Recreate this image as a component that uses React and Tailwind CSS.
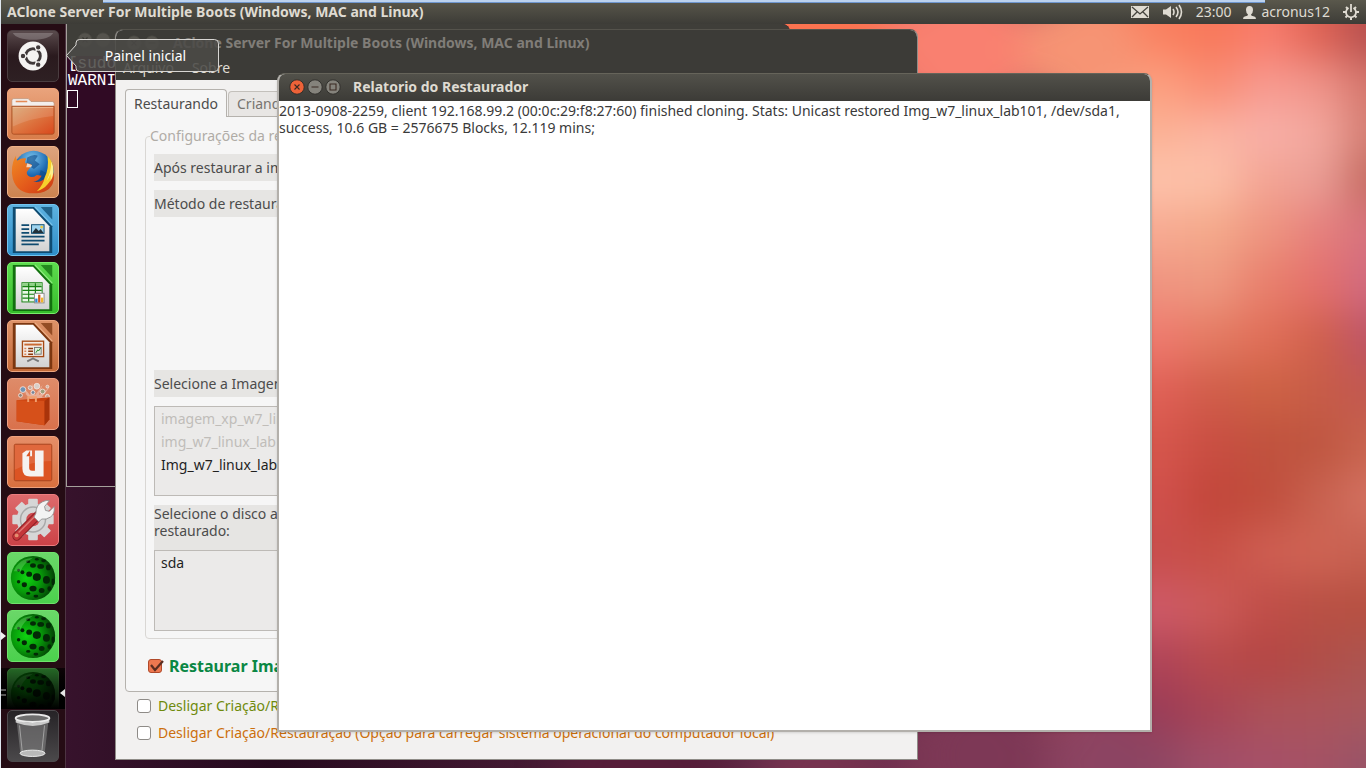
import React, { useState } from 'react';

// Colour mesh on the right side of the wallpaper, one row per height, left to right
const MESH_X = [1060, 1185, 1240, 1295, 1345, 1440];
const MESH = [
  { y: -20, h: 80, colors: ['#fa8060', '#f8785a', '#f87c6c', '#de6254', '#b54f4e'] },
  { y: 60, h: 50, colors: ['#fca080', '#f98d74', '#f79a90', '#f0948a', '#d4766c'] },
  { y: 110, h: 45, colors: ['#fbb295', '#fbb4a2', '#f8b0a8', '#f3a89e', '#d47e74'] },
  { y: 155, h: 50, colors: ['#fdc2aa', '#fcc0a8', '#f3a494', '#ea9e96', '#c46a60'] },
  { y: 205, h: 52, colors: ['#f7aa92', '#f4a98a', '#ee9480', '#e6807c', '#d6727e'] },
  { y: 257, h: 55, colors: ['#ef9480', '#ee9880', '#e87f6c', '#e4706c', '#d06a80'] },
  { y: 312, h: 53, colors: ['#ee7a6e', '#e47a62', '#df6e58', '#d0604c', '#bd5468'] },
  { y: 365, h: 53, colors: ['#e06056', '#d05d4a', '#cd6244', '#c75c48', '#c25850'] },
  { y: 418, h: 54, colors: ['#d6564c', '#c94e42', '#c0523e', '#bf5640', '#c8644f'] },
  { y: 472, h: 53, colors: ['#d0504c', '#c2463a', '#c04e3d', '#c86250', '#d47262'] },
  { y: 525, h: 55, colors: ['#c84e4c', '#c85046', '#ce5e52', '#cf6454', '#c46050'] },
  { y: 580, h: 55, colors: ['#ce5a68', '#cc5a58', '#c04e48', '#b85044', '#b75041'] },
  { y: 635, h: 50, colors: ['#b04458', '#b84a4c', '#b44644', '#b04e48', '#ac5550'] },
  { y: 685, h: 50, colors: ['#9c3c56', '#a84454', '#ac5258', '#ac545a', '#a8585c'] },
  { y: 735, h: 80, colors: ['#904864', '#a04e68', '#a65068', '#a45264', '#985468'] },
];

// Softer spots left of the mesh: x, y, radius, colour
const SPOTS = [
  [820, 30, 80, '#fb7350'],
  [960, 50, 80, '#f98070'],
  [1080, 50, 60, '#f69474'],
  [1100, 765, 60, '#8c4462'],
  [980, 755, 70, '#7d3856'],
  [820, 775, 60, '#76334f'],
  [640, 780, 80, '#561d39'],
];

const Wallpaper = () => (
  <svg
    className="absolute inset-0 h-full w-full"
    viewBox="0 0 1366 768"
    preserveAspectRatio="none"
    aria-hidden="true"
  >
    <defs>
      <linearGradient id="wall" x1="0" x2="1" y1="0" y2="0">
        <stop offset="0" stopColor="#3c1530" />
        <stop offset="0.2" stopColor="#260a1e" />
        <stop offset="0.65" stopColor="#6f3050" />
        <stop offset="1" stopColor="#cf6252" />
      </linearGradient>
      <filter id="soft" x="-20%" y="-20%" width="140%" height="140%" colorInterpolationFilters="sRGB">
        <feGaussianBlur stdDeviation="20" />
      </filter>
    </defs>
    <rect width="1366" height="768" fill="url(#wall)" />
    <g filter="url(#soft)">
      {MESH.map(({ y, h, colors }) =>
        colors.map((color, i) => (
          <rect key={`${y}-${color}`} x={MESH_X[i]} y={y} width={MESH_X[i + 1] - MESH_X[i] + 1} height={h + 1} fill={color} />
        )),
      )}
      {SPOTS.map(([x, y, r, color]) => (
        <circle key={`${x}-${y}`} cx={x} cy={y} r={r} fill={color} />
      ))}
    </g>
  </svg>
);

const DashIcon = () => (
  <svg viewBox="0 0 52 52" className="h-full w-full">
    <path d="M5 2h42q-4 7-21 7T5 2z" fill="#fff" opacity="0.22" />
    <circle cx="26" cy="26" r="15" fill="#f5f3f2" />
    <circle cx="26" cy="26" r="7.6" fill="none" stroke="#40393a" strokeWidth="3" />
    <path d="M26 26l-13 0M26 26l6.5-11.3M26 26l6.5 11.3" stroke="#f5f3f2" strokeWidth="1.4" />
    <g fill="#40393a" stroke="#f5f3f2" strokeWidth="1.2">
      <circle cx="15.6" cy="26" r="2.9" />
      <circle cx="31.4" cy="17" r="2.9" />
      <circle cx="31.4" cy="35" r="2.9" />
    </g>
    <circle cx="26" cy="26" r="5.6" fill="#f5f3f2" />
  </svg>
);

const FolderIcon = () => (
  <svg viewBox="0 0 52 52" className="h-full w-full">
    <defs>
      <linearGradient id="folder" x1="0" y1="0" x2="1" y2="1">
        <stop offset="0" stopColor="#d8a470" />
        <stop offset="0.5" stopColor="#dd7540" />
        <stop offset="1" stopColor="#d9481c" />
      </linearGradient>
    </defs>
    <path d="M4 18V12q0-2 2-2h15l3 3h22q2 0 2 2v3z" fill="#f3efec" stroke="#b98a6e" strokeWidth="0.7" />
    <path d="M8 13h12" stroke="#e38a55" strokeWidth="1.6" />
    <path d="M4 18h44v27q0 2-2 2H6q-2 0-2-2z" fill="url(#folder)" stroke="#a84d20" strokeWidth="0.9" />
    <path d="M5 19h42v9Q24 30 5 39z" fill="#fff" opacity="0.13" />
    <path d="M5 19.2h42" stroke="#f6c39c" strokeWidth="0.8" />
  </svg>
);

const FirefoxIcon = () => (
  <svg viewBox="0 0 52 52" className="h-full w-full">
    <defs>
      <radialGradient id="globe" cx="0.45" cy="0.2" r="0.8">
        <stop offset="0" stopColor="#7cc6ee" />
        <stop offset="0.5" stopColor="#1d69b2" />
        <stop offset="1" stopColor="#0c2c66" />
      </radialGradient>
      <linearGradient id="fox" x1="0" y1="0" x2="1" y2="1">
        <stop offset="0" stopColor="#f08a24" />
        <stop offset="0.6" stopColor="#e2561a" />
        <stop offset="1" stopColor="#c93a14" />
      </linearGradient>
    </defs>
    <circle cx="26.5" cy="25" r="21" fill="url(#globe)" />
    <path d="M20 11q6-4 11-2l-3 5 5 4-6 5-8-5zM34 24l6 3-2 8-6-3z" fill="#0d4787" opacity="0.6" />
    <path
      d="M8 9q0 4 2 5 4-3 9-2-2 3-1 5 5 0 7 2l-4 5q-3 3 0 6 4 3 9-1l5 1q-3 6-9 6 7 2 13-4 5-5 5-13 3 6 4 12-1 16-18 17-20 2-25-15-3-12 3-24z"
      fill="url(#fox)"
    />
    <path d="M41 9q7 7 6 16-1 9-6 14-4 5-11 7 7-7 8-14 5-10 3-23z" fill="#f7cf2c" />
    <path d="M45 15q5 11-1 21 1-6 0-8-1 4-4 7 5-9 5-20z" fill="#fdf08a" />
    <path d="M20 17l5 2-1 2-5 0z" fill="#f3d7c1" />
  </svg>
);

// Sheet shared by the three LibreOffice launchers
const Sheet = ({ dark, light, children }) => (
  <svg viewBox="0 0 52 52" className="h-full w-full">
    <defs>
      <linearGradient id={`page${dark.slice(1)}`} x1="0" y1="0" x2="0" y2="1">
        <stop offset="0" stopColor="#ffffff" />
        <stop offset="1" stopColor="#d2d2d2" />
      </linearGradient>
    </defs>
    <path d="M5 2h22l19 20v28H5z" fill={dark} />
    <path d="M34 2h12v13z" fill={dark} opacity="0.75" />
    <path d="M28 2l18 19" stroke={light} strokeWidth="1.2" opacity="0.7" />
    <path d="M8 4h18l17 18v26H8z" fill={`url(#page${dark.slice(1)})`} />
    {children}
  </svg>
);

const WriterIcon = () => (
  <Sheet dark="#0f4b70" light="#8fd0f2">
    <path d="M14 21h8M14 25h8M14 29h8M14 33h24M14 37h24M14 41h18" stroke="#0f4b70" strokeWidth="1.8" />
    <rect x="24.5" y="20.5" width="13" height="9" fill="#9ed4ef" stroke="#0f4b70" />
    <path d="M25 29l4-5 3 3 2-2 3 4z" fill="#22313a" />
    <circle cx="35" cy="23" r="1.4" fill="#f1c93a" />
  </Sheet>
);

const CalcIcon = () => (
  <Sheet dark="#12700f" light="#a9f59a">
    <rect x="14.5" y="20.5" width="21" height="20" fill="#e9f7e6" stroke="#178012" />
    <rect x="15" y="21" width="20" height="3" fill="#8fd187" />
    <path d="M15 24.5h20M15 28.5h20M15 32.5h20M15 36.5h20M21.5 21v19M28.5 21v19" stroke="#178012" strokeWidth="1.2" />
    <rect x="27.5" y="31.5" width="10" height="10" fill="#fff" stroke="#8b8b8b" />
    <path d="M29.5 41v-4" stroke="#2b86d1" strokeWidth="2.4" />
    <path d="M32.5 41v-8" stroke="#d1591c" strokeWidth="2.4" />
    <path d="M35.5 41v-5" stroke="#f0b52c" strokeWidth="2.4" />
  </Sheet>
);

const ImpressIcon = () => (
  <Sheet dark="#7c3710" light="#f4bd95">
    <rect x="15" y="21" width="22" height="16" fill="#f4ebe4" stroke="#a54a16" strokeWidth="1.4" />
    <path d="M17 24.5h18" stroke="#c96a34" strokeWidth="2" />
    <path d="M17 28.5h2M17 31.5h2M17 34.5h2" stroke="#d9855a" strokeWidth="1.6" />
    <path d="M21 28.5h5M21 31.5h5M21 34.5h5" stroke="#8a3a0e" strokeWidth="1.6" />
    <rect x="27.5" y="27.5" width="7" height="7" fill="#dff0dd" stroke="#777" />
    <path d="M29 33l2-3 1 1 2-3" fill="none" stroke="#208020" />
    <path d="M26 38v2M20 42l6-3 6 3" fill="none" stroke="#777" strokeWidth="2" />
  </Sheet>
);

const SoftwareIcon = () => (
  <svg viewBox="0 0 52 52" className="h-full w-full">
    <path d="M25 22L9 7l10 9-4-9 8 10 2-13 3 13 8-11-4 11 11-8-8 10 9-1-13 6z" fill="#fff" opacity="0.35" />
    <g stroke="#f6e2da" strokeWidth="0.9">
      <circle cx="15.5" cy="11" r="3" fill="#6f95b5" />
      <circle cx="23" cy="9" r="2" fill="#bda99c" />
      <circle cx="30" cy="7.5" r="3" fill="#d8cfc8" />
      <circle cx="36" cy="13" r="2.5" fill="#9c9f7c" />
      <circle cx="41" cy="8" r="1.5" fill="#c9b6a6" />
      <circle cx="13" cy="17" r="2" fill="#8d8379" />
      <circle cx="26" cy="14" r="2" fill="#74869c" />
      <circle cx="41" cy="18" r="2" fill="#c6a693" />
    </g>
    <path d="M9 22l34-3v23l-5 6-29-4z" fill="#c8410f" />
    <path d="M9 22l29 1v25l-29-4z" fill="#d6501a" />
    <path d="M38 23l5-4v23l-5 6z" fill="#a9340b" />
    <path d="M21 24v-5h8v5" fill="none" stroke="#f0a070" strokeWidth="2" />
  </svg>
);

const UbuntuOneIcon = () => (
  <svg viewBox="0 0 52 52" className="h-full w-full">
    <rect x="6.5" y="7.5" width="39" height="38" rx="1.5" fill="#dc5423" stroke="#a8441d" />
    <path d="M7 8h38v17q-20 0-38 9z" fill="#fff" opacity="0.12" />
    <path d="M15 17l4-3h6v6h-3v12q0 3 3 3h3V14h9v27H23q-8 0-8-8z" fill="#f5f2f0" />
    <path d="M19 20l4-6v6z" fill="#dc5423" />
  </svg>
);

const SettingsIcon = () => (
  <svg viewBox="0 0 52 52" className="h-full w-full">
    <g fill="#d6d6d6">
      {[0, 45, 90, 135].map((deg) => (
        <rect key={deg} x="21" y="4" width="10" height="43" rx="1" transform={`rotate(${deg} 26 25.5)`} />
      ))}
      <circle cx="26" cy="25.5" r="17" />
    </g>
    <circle cx="26" cy="25.5" r="13" fill="none" stroke="#a9a9a9" strokeWidth="1.5" />
    <circle cx="26" cy="25.5" r="7" fill="#cf4b50" />
    <path d="M9 43l22-22" stroke="#8c1f24" strokeWidth="9" strokeLinecap="round" />
    <path d="M9 43l22-22" stroke="#c3363a" strokeWidth="7" strokeLinecap="round" />
    <path d="M11 39l18-18" stroke="#e07a76" strokeWidth="1.5" />
    <path
      d="M29 19q0-9 7-12 4-2 7-1l-5 6 1 4 4 1 5-5q1 8-4 11-4 3-9 2l-3 3-5-5z"
      fill="#f3f3f3"
      stroke="#8f8f8f"
      strokeWidth="0.9"
    />
    <circle cx="9" cy="42" r="2" fill="#e38d6f" />
  </svg>
);

const SphereIcon = () => (
  <svg viewBox="0 0 52 52" className="h-full w-full">
    <defs>
      <radialGradient id="sphere" cx="0.35" cy="0.5" r="0.65">
        <stop offset="0" stopColor="#0fd411" />
        <stop offset="0.5" stopColor="#079a0a" />
        <stop offset="1" stopColor="#033f05" />
      </radialGradient>
    </defs>
    <circle cx="26" cy="26" r="23" fill="url(#sphere)" />
    <g fill="#032806">
      <ellipse cx="30" cy="6.5" rx="2" ry="1.3" />
      <ellipse cx="37" cy="8" rx="2.5" ry="1.5" />
      <ellipse cx="21" cy="9" rx="2.2" ry="1.5" />
      <ellipse cx="26" cy="13" rx="3" ry="2.3" />
      <ellipse cx="34" cy="14" rx="3.5" ry="2.5" />
      <ellipse cx="42" cy="15" rx="2.5" ry="3" />
      <ellipse cx="11" cy="18" rx="1.5" ry="1.5" />
      <ellipse cx="15" cy="20" rx="2" ry="2" />
      <ellipse cx="22" cy="22" rx="3" ry="2.8" />
      <ellipse cx="30" cy="25" rx="4.2" ry="4" />
      <ellipse cx="40" cy="28" rx="3.6" ry="4" />
      <ellipse cx="47" cy="30" rx="1.7" ry="3.5" />
      <ellipse cx="11" cy="30" rx="1.8" ry="1.8" />
      <ellipse cx="17" cy="33" rx="2.7" ry="2.5" />
      <ellipse cx="26" cy="37" rx="3.7" ry="3" />
      <ellipse cx="35" cy="39" rx="3" ry="2.6" />
      <ellipse cx="43" cy="37" rx="2" ry="2.5" />
      <ellipse cx="21" cy="42" rx="2.2" ry="1.5" />
      <ellipse cx="29" cy="45" rx="2.5" ry="1.5" />
    </g>
    <path d="M6 19q5-13 20-14-10 6-13 14z" fill="#b4ffb0" opacity="0.25" />
  </svg>
);

const TrashIcon = () => (
  <svg viewBox="0 0 52 52" className="h-full w-full">
    <path d="M9 11l4 34q12 5 25 0l4-34z" fill="#8a8a8a" opacity="0.55" />
    <path d="M12 15l3 29M38 15l-3 29" stroke="#bdbdbd" opacity="0.7" />
    <ellipse cx="25.5" cy="44" rx="13" ry="3.3" fill="#b9b9b9" stroke="#ececec" />
    <path d="M8 8q17 9 35 0v4q-17 7-35 0z" fill="#c9c9c9" />
    <ellipse cx="25.5" cy="7.5" rx="17.5" ry="4" fill="#6d6d6d" stroke="#e9e9e9" strokeWidth="2" />
  </svg>
);

const LAUNCHERS = [
  { name: 'Painel inicial', icon: DashIcon, tile: 'bg-linear-to-b from-[#5a4b4d] via-[#2a1a1e] to-[#2e2023] border-[#4a3d40]' },
  { name: 'Pasta pessoal', icon: FolderIcon, tile: 'bg-linear-to-b from-[#e9a37c] to-[#d87d4a] border-[#f0a37a]' },
  { name: 'Firefox', icon: FirefoxIcon, tile: 'bg-linear-to-b from-[#dda37e] to-[#cc8350] border-[#eeb188]' },
  { name: 'LibreOffice Writer', icon: WriterIcon, tile: 'bg-linear-to-b from-[#5db2e0] to-[#2f8fc9] border-[#72c4ef]' },
  { name: 'LibreOffice Calc', icon: CalcIcon, tile: 'bg-linear-to-b from-[#5ddb4e] to-[#35bd2b] border-[#79ee6b]' },
  { name: 'LibreOffice Impress', icon: ImpressIcon, tile: 'bg-linear-to-b from-[#dd9268] to-[#c46a38] border-[#eda67f]' },
  { name: 'Central de programas', icon: SoftwareIcon, tile: 'bg-linear-to-b from-[#de8b69] to-[#d9714c] border-[#eda083]' },
  { name: 'Ubuntu One', icon: UbuntuOneIcon, tile: 'bg-linear-to-b from-[#e58e68] to-[#d9703f] border-[#eea17e]' },
  { name: 'Configurações', icon: SettingsIcon, tile: 'bg-linear-to-b from-[#dd6a6c] to-[#cc4247] border-[#ec7d7f]' },
  { name: 'AClone', icon: SphereIcon, tile: 'bg-linear-to-b from-[#6ad768] to-[#4bd14d] border-[#6fe26c]' },
  { name: 'AClone Server', icon: SphereIcon, tile: 'bg-linear-to-b from-[#6ad768] to-[#4bd14d] border-[#6fe26c]', running: true },
];

const Tile = ({ name, tile, children }) => (
  <button type="button" aria-label={name} className={`h-[52px] w-[52px] shrink-0 rounded-[5px] border ${tile}`}>
    {children}
  </button>
);

const Launcher = () => (
  <nav className="relative z-10 ml-px flex w-[65px] shrink-0 flex-col items-start gap-[6px] border-r border-[#4d3442] bg-[#250c14] pl-[6px] pt-[6px]">
    {LAUNCHERS.map(({ name, icon: Icon, tile, running }) => (
      <div key={name} className="relative flex">
        <Tile name={name} tile={tile}>
          <Icon />
        </Tile>
        {running && (
          <svg viewBox="0 0 5 8" className="absolute top-[22px] -left-[6px] h-2 w-[5px]">
            <path d="M0 0l5 4-5 4z" fill="#f2f2f2" />
          </svg>
        )}
      </div>
    ))}
    {/* folded entry above the trash */}
    <div className="relative -ml-[6px] h-[41px] w-16 overflow-hidden bg-linear-to-b from-[#1a070d] to-black pl-[6px]">
      <Tile name="AClone Client" tile="bg-[#4bd14d] border-[#6fe26c]">
        <SphereIcon />
      </Tile>
      <div className="absolute inset-0 bg-linear-to-b from-black/50 to-black" />
      <svg viewBox="0 0 64 12" className="absolute top-[19px] left-0 h-3 w-16">
        <path d="M0 3h5M0 8h5" stroke="#555" strokeWidth="2" />
        <path d="M64 2l-5 4 5 4z" fill="#e5e5e5" />
      </svg>
    </div>
    <div className="-mt-[5px] flex">
      <Tile name="Lixeira" tile="bg-linear-to-b from-[#262326] to-[#4b494b] border-[#4d4a4d]">
        <TrashIcon />
      </Tile>
    </div>
  </nav>
);

const TopBar = () => (
  <header className="relative z-20 ml-px flex h-6 shrink-0 items-center bg-linear-to-b from-[#5a584c] to-[#3d3c37] px-[6px] text-[#dfdbd2]">
    <div className="absolute top-0 right-[101px] left-[102px] h-[3px] border-b border-[#6f97cf] bg-[#bcd2ee]" />
    <h1 className="font-bold">AClone Server For Multiple Boots (Windows, MAC and Linux)</h1>
    <div className="ml-auto flex items-center pr-px">
      <button type="button" aria-label="Mensagens" className="mr-[14px]">
        <svg viewBox="0 0 18 12" className="h-3 w-[18px]">
          <rect width="18" height="12" fill="#dfdbd2" />
          <path d="M1 1l8 7 8-7M1 11l5-5M17 11l-5-5" fill="none" stroke="#45443e" strokeWidth="1.3" />
        </svg>
      </button>
      <button type="button" aria-label="Som" className="mr-[13px]">
        <svg viewBox="0 0 20 16" className="h-4 w-5">
          <path d="M0 5.5h3L8 2v12l-5-3.500H0z" fill="#dfdbd2" />
          <path d="M10 5q2 3 0 6M13 3q4 5 0 10M16 1q5 7 0 14" fill="none" stroke="#dfdbd2" strokeWidth="1.6" />
        </svg>
      </button>
      <span className="mr-3">23:00</span>
      <svg viewBox="0 0 13 13" className="mr-[5px] h-[13px] w-[13px]">
        <path d="M6.5 0q3.500 0 3.500 4 0 3-2 4.500 0 1.500 2.500 1.700 2.500.3 2.500 2.800H0q0-2.500 2.500-2.800Q5 10 5 8.500 3 7 3 4q0-4 3.500-4z" fill="#dfdbd2" />
      </svg>
      <span className="mr-[13px]">acronus12</span>
      <button type="button" aria-label="Sistema">
        <svg viewBox="0 0 16 16" className="h-4 w-4">
          <path
            d="M3 3l2 2M13 3l-2 2M0 8h3M16 8h-3M2.500 13.500l2-2M13.500 13.500l-2-2M8 16v-3"
            stroke="#dfdbd2"
            strokeWidth="2"
          />
          <path d="M5.500 4a5 5 0 1 0 5 0" fill="none" stroke="#dfdbd2" strokeWidth="1.8" />
          <path d="M8 0v8" stroke="#dfdbd2" strokeWidth="1.8" />
        </svg>
      </button>
    </div>
  </header>
);

const BUTTONS = [
  { name: 'Fechar', d: 'M5.500 5.500l5 5M10.500 5.500l-5 5' },
  { name: 'Minimizar', d: 'M4.500 8h7' },
  { name: 'Maximizar', d: 'M5 5h6v6H5z' },
];

const WindowButtons = ({ active, count = 3 }) => (
  <div className="flex gap-[2px]">
    {BUTTONS.slice(0, count).map(({ name, d }, i) => (
      <button key={name} type="button" aria-label={name}>
        <svg viewBox="0 0 16 16" className="h-4 w-4">
          <circle
            cx="8"
            cy="8"
            r="7.2"
            fill={active ? (i === 0 ? '#ee6238' : '#85837c') : '#55534d'}
            stroke={active ? '#2f2e2a' : '#46453f'}
            strokeWidth="0.9"
          />
          <path d={d} fill="none" stroke={active ? '#3b2a22' : '#35342f'} strokeWidth="1.1" />
        </svg>
      </button>
    ))}
  </div>
);

const Terminal = () => (
  <section className="absolute top-0 left-0 h-[463px] w-[724px] overflow-hidden rounded-tr-lg border-b border-l border-[#a5a09b] bg-[#300a24]">
    <div className="flex h-8 items-center bg-[#3f3e39] pl-[10px]">
      <WindowButtons />
    </div>
    <pre className="pl-px font-['Liberation_Mono',monospace] text-[16px] leading-[17px] text-white">
      {'[sudo\nWARNIN'}
    </pre>
    <div className="h-[18px] w-[11px] border border-white" />
  </section>
);

const Check = ({ label, bold, color, defaultChecked = false }) => {
  const [checked, setChecked] = useState(defaultChecked);

  return (
    <label className={`flex items-center gap-[7px] whitespace-nowrap ${color} ${bold ? 'text-[16px] font-bold' : ''}`}>
      <span className="relative flex">
        <input
          type="checkbox"
          checked={checked}
          onChange={() => setChecked(!checked)}
          className="h-[14px] w-[14px] appearance-none rounded-[3px] border border-[#8e8b87] bg-white checked:border-[#b0492a] checked:bg-[#ee7850]"
        />
        {checked && (
          <svg viewBox="0 0 16 14" className="pointer-events-none absolute top-0 left-0 h-[14px] w-4">
            <path d="M3 6l4 5 8-9" fill="none" stroke="#5b2d20" strokeWidth="2.2" />
          </svg>
        )}
      </span>
      {label}
    </label>
  );
};

const FieldLabel = ({ children }) => (
  <p className="h-[27px] bg-[#e6e5e3] leading-[27px] whitespace-nowrap">{children}</p>
);

const MainWindow = () => (
  <section className="absolute top-[5px] left-[49px] flex h-[731px] w-[803px] flex-col overflow-hidden rounded-t-lg border border-[#8f8c87] border-t-[#55534c] bg-[#f2f1f0] text-[#4c4c4c]">
    <div className="h-[50px] shrink-0 bg-[#3c3b37]">
      <div className="flex h-[26px] items-center gap-[13px] pl-[10px]">
        <WindowButtons count={2} />
        <h2 className="font-bold whitespace-nowrap text-[#807d78]">
          AClone Server For Multiple Boots (Windows, MAC and Linux)
        </h2>
      </div>
      <div className="flex h-6 items-center gap-[18px] pl-[7px] text-[#dfdbd2]">
        <button type="button">Arquivo</button>
        <button type="button">Sobre</button>
      </div>
    </div>

    <div className="px-[9px] pt-[9px]">
      <div role="tablist" className="flex items-end">
        <button
          type="button"
          role="tab"
          aria-selected="true"
          className="relative -mb-px h-[28px] w-[102px] rounded-t-[4px] border border-b-0 border-[#b5b2ad] bg-[#f6f6f6]"
        >
          Restaurando
        </button>
        <button
          type="button"
          role="tab"
          aria-selected="false"
          className="ml-px h-[25px] rounded-t-[4px] border border-b-0 border-[#c3c0bb] bg-[#e8e6e4] px-2 text-[#77746f]"
        >
          Criando
        </button>
      </div>

      <div className="rounded-b-[4px] border border-[#b5b2ad] bg-[#f6f6f6] px-[19px] pt-[9px] pb-[15px]">
        <fieldset className="rounded-[4px] border border-[#d9d7d4] px-2 pb-[7px]">
          <legend className="-ml-1 h-5 leading-5 text-[#b0aca6]">Configurações da restauração</legend>
          <div className="mt-2 flex flex-col gap-[9px]">
            <FieldLabel>Após restaurar a imagem:</FieldLabel>
            <FieldLabel>Método de restauração:</FieldLabel>
          </div>
          <div className="mt-[153px]">
            <FieldLabel>Selecione a Imagem:</FieldLabel>
          </div>
          <ul className="mt-[9px] h-[90px] border border-[#bdbab6] bg-[#ebeae9] pl-[6px] leading-[23px]">
            <li className="text-[#c0bdb9]">imagem_xp_w7_linux</li>
            <li className="text-[#c0bdb9]">img_w7_linux_lab</li>
            <li className="text-[#1f1f1f]">Img_w7_linux_lab101</li>
          </ul>
          <p className="mt-[9px] h-[45px] bg-[#e6e5e3] leading-[17px]">
            Selecione o disco a ser
            <br />
            restaurado:
          </p>
          <ul className="h-[81px] border border-[#bdbab6] bg-[#ebeae9] pl-[6px] leading-[23px]">
            <li className="text-[#1f1f1f]">sda</li>
          </ul>
        </fieldset>
        <div className="mt-[17px] pl-[3px]">
          <Check label="Restaurar Imagem" color="text-[#0a8744]" bold defaultChecked />
        </div>
      </div>

      <div className="mt-1 flex flex-col gap-[7px] pl-3">
        <Check label="Desligar Criação/Restauração" color="text-[#6f8a0c]" />
        <Check
          label="Desligar Criação/Restauração (Opção para carregar sistema operacional do computador local)"
          color="text-[#cc6f0c]"
        />
      </div>
    </div>
  </section>
);

const ReportWindow = () => (
  <section className="absolute top-[49px] left-[211px] flex h-[659px] w-[875px] flex-col overflow-hidden rounded-t-lg border-2 border-t border-[#b3b0ab] border-t-[#66645a] bg-white shadow-sm">
    <div className="flex h-[27px] shrink-0 items-center gap-3 bg-linear-to-b from-[#52514a] to-[#3c3b37] pb-px pl-[10px]">
      <WindowButtons active />
      <h2 className="font-bold text-[#dfdbd2]">Relatorio do Restaurador</h2>
    </div>
    <p className="pt-px leading-[17px] text-[#3a3a3a]">
      2013-0908-2259, client 192.168.99.2 (00:0c:29:f8:27:60) finished cloning. Stats: Unicast restored
      Img_w7_linux_lab101, /dev/sda1, success, 10.6 GB = 2576675 Blocks, 12.119 mins;
    </p>
  </section>
);

const Tooltip = () => (
  <div role="tooltip" className="absolute top-[15px] left-0 z-10 h-[33px] w-[153px]">
    <svg viewBox="0 0 153 33" className="absolute inset-0 h-full w-full">
      <path
        d="M.5 16.500L10 6V4q0-3.500 3.500-3.500h135q4 0 4 4v24q0 4-4 4h-135Q10 32.500 10 29v-2z"
        fill="#4b4a47"
        fillOpacity="0.88"
        stroke="#d8d6d3"
      />
    </svg>
    <span className="relative flex h-full items-center justify-center pl-[6px] text-white">Painel inicial</span>
  </div>
);

const App = () => {
  return (
    <div className="relative flex h-screen flex-col overflow-hidden bg-[#dfe6ee] font-['Noto_Sans',sans-serif] text-[14px] leading-5">
      <TopBar />
      <div className="flex min-h-0 flex-1">
        <Launcher />
        <main className="relative min-w-0 flex-1">
          <div className="absolute -top-6 right-0 bottom-0 -left-[66px] ml-px overflow-hidden">
            <Wallpaper />
          </div>
          <Terminal />
          <MainWindow />
          <ReportWindow />
          <Tooltip />
        </main>
      </div>
    </div>
  );
};

export default App;
